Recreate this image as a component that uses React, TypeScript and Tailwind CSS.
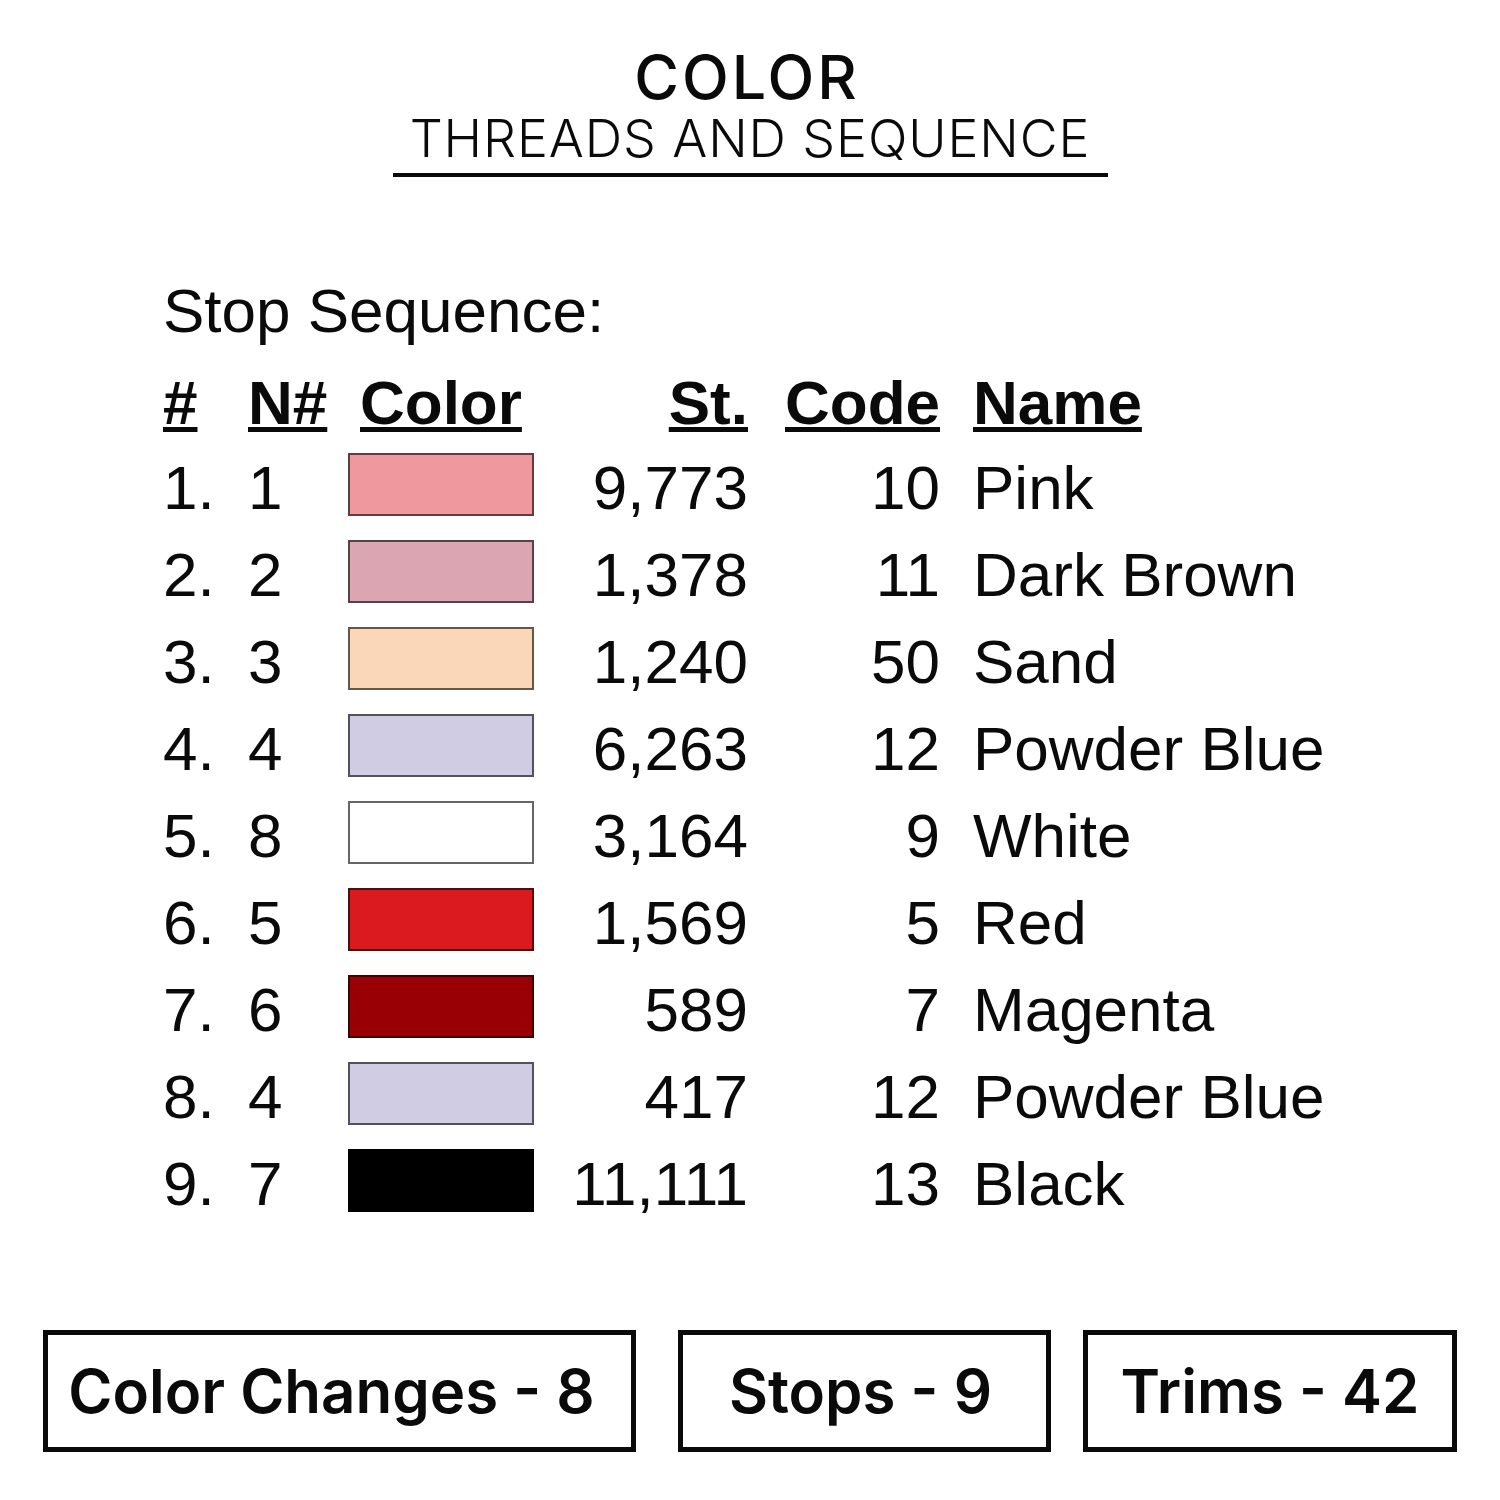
import React from "react";

const rows = [
  { n: "1.", id: "1", color: "#EF999F", st: "9,773", code: "10", name: "Pink" },
  { n: "2.", id: "2", color: "#DBA5B2", st: "1,378", code: "11", name: "Dark Brown" },
  { n: "3.", id: "3", color: "#FAD7B8", st: "1,240", code: "50", name: "Sand" },
  { n: "4.", id: "4", color: "#CFCCE3", st: "6,263", code: "12", name: "Powder Blue" },
  { n: "5.", id: "8", color: "#FFFFFF", st: "3,164", code: "9", name: "White" },
  { n: "6.", id: "5", color: "#DA1A1E", st: "1,569", code: "5", name: "Red" },
  { n: "7.", id: "6", color: "#990005", st: "589", code: "7", name: "Magenta" },
  { n: "8.", id: "4", color: "#CFCCE3", st: "417", code: "12", name: "Powder Blue" },
  { n: "9.", id: "7", color: "#000000", st: "11,111", code: "13", name: "Black" },
];

const grid = "grid grid-cols-[85px_100px_186px_214px_192px_1fr] items-center";
const head = "underline decoration-[5px] underline-offset-[3px]";

export default function App() {
  return (
    <main className="w-[1500px] h-[1500px] bg-white text-[#0a0a0a] flex flex-col">
      {/* Title */}
      <div className="flex flex-col items-center pt-[47px] font-['Inter',sans-serif]">
        <h1 className="text-[61px] leading-[61px] font-medium tracking-[3px] pr-[6px]">COLOR</h1>
        <p className="mt-[5px] text-[52px] leading-[52px] font-light tracking-[0.9px]">THREADS AND SEQUENCE</p>
        <div className="mt-[8px] w-[715px] h-[4px] bg-[#0a0a0a]" />
      </div>

      {/* Stop sequence table */}
      <section className="pl-[163px] mt-[103px] font-['Liberation_Sans',Arial,sans-serif] text-[62px] leading-[62px]">
        <p>Stop Sequence:</p>

        <div className={`${grid} mt-[30px] font-bold`}>
          <span><span className={head}>#</span></span>
          <span><span className={head}>N#</span></span>
          <span className="pl-[12px]"><span className={head}>Color</span></span>
          <span className="text-right"><span className={head}>St.</span></span>
          <span className="text-right"><span className={head}>Code</span></span>
          <span className="pl-[33px]"><span className={head}>Name</span></span>
        </div>

        <div className="mt-[23px] flex flex-col gap-[25px]">
          {rows.map((r, i) => (
            <div key={i} className={grid}>
              <span>{r.n}</span>
              <span>{r.id}</span>
              <div
                className="h-[63px] w-[186px] -mt-[8px] border-2 border-black/60"
                style={{ backgroundColor: r.color }}
              />
              <span className="text-right">{r.st}</span>
              <span className="text-right">{r.code}</span>
              <span className="pl-[33px]">{r.name}</span>
            </div>
          ))}
        </div>
      </section>

      {/* Summary boxes */}
      <div className="mt-[115px] flex pl-[43px] font-['Inter',sans-serif] font-semibold text-[60px] leading-none">
        <div className="w-[593px] h-[122px] pr-[16px] border-[5px] border-[#0a0a0a] flex items-center justify-center">
          Color Changes - 8
        </div>
        <div className="ml-[42px] w-[373px] h-[122px] pr-[8px] border-[5px] border-[#0a0a0a] flex items-center justify-center">
          Stops - 9
        </div>
        <div className="ml-[32px] w-[374px] h-[122px] border-[5px] border-[#0a0a0a] flex items-center justify-center">
          Trims - 42
        </div>
      </div>
    </main>
  );
}
